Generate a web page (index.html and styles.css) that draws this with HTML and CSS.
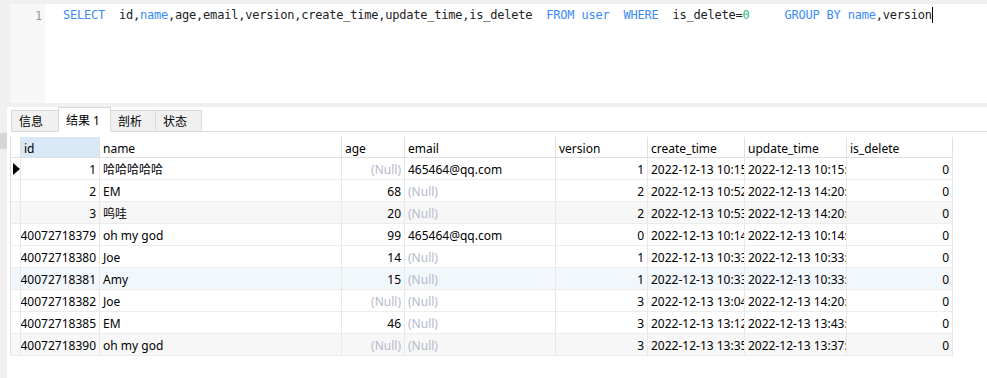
FILE: index.html
```html
<!DOCTYPE html>
<html>
<head>
<meta charset="utf-8">
<link rel="stylesheet" href="styles.css">
</head>
<body>
<div class="editor">
  <div class="gutter"><span class="ln">1</span></div>
  <div class="code"><span class="kw">SELECT</span>  id,<span class="kw">name</span>,age,email,version,create_time,update_time,is_delete  <span class="kw">FROM</span> <span class="kw">user</span>  <span class="kw">WHERE</span>  is_delete=<span class="num">0</span>     <span class="kw">GROUP BY</span> <span class="kw">name</span>,version<span class="caret"></span></div>
</div>
<div class="results">
  <div class="side"><div class="handle"></div></div>
  <div class="pane">
    <div class="tabs">
      <div class="tab t1">信息</div>
      <div class="tab active t2">结果 1</div>
      <div class="tab t3">剖析</div>
      <div class="tab t4">状态</div>
      <div class="tabfill"></div>
    </div>
    <div class="grid">
      <div class="c hd ind"></div><div class="c hd sel">id</div><div class="c hd">name</div><div class="c hd">age</div><div class="c hd">email</div><div class="c hd">version</div><div class="c hd">create_time</div><div class="c hd">update_time</div><div class="c hd">is_delete</div>

      <div class="c ind"><span class="arrow"></span></div><div class="c r"><span>1</span></div><div class="c">哈哈哈哈哈</div><div class="c r nul"><span>(Null)</span></div><div class="c">465464@qq.com</div><div class="c r"><span>1</span></div><div class="c">2022-12-13 10:15:32</div><div class="c">2022-12-13 10:15:32</div><div class="c r"><span>0</span></div>

      <div class="c ind"></div><div class="c r"><span>2</span></div><div class="c">EM</div><div class="c r"><span>68</span></div><div class="c nul">(Null)</div><div class="c r"><span>2</span></div><div class="c">2022-12-13 10:52:18</div><div class="c">2022-12-13 14:20:05</div><div class="c r"><span>0</span></div>

      <div class="c ind g"></div><div class="c r g"><span>3</span></div><div class="c g">呜哇</div><div class="c r g"><span>20</span></div><div class="c nul g">(Null)</div><div class="c r g"><span>2</span></div><div class="c g">2022-12-13 10:53:41</div><div class="c g">2022-12-13 14:20:05</div><div class="c r g"><span>0</span></div>

      <div class="c ind"></div><div class="c r"><span>1602840072718379</span></div><div class="c">oh my god</div><div class="c r"><span>99</span></div><div class="c">465464@qq.com</div><div class="c r"><span>0</span></div><div class="c">2022-12-13 10:14:27</div><div class="c">2022-12-13 10:14:27</div><div class="c r"><span>0</span></div>

      <div class="c ind"></div><div class="c r"><span>1602840072718380</span></div><div class="c">Joe</div><div class="c r"><span>14</span></div><div class="c nul">(Null)</div><div class="c r"><span>1</span></div><div class="c">2022-12-13 10:33:09</div><div class="c">2022-12-13 10:33:09</div><div class="c r"><span>0</span></div>

      <div class="c ind b"></div><div class="c r b"><span>1602840072718381</span></div><div class="c b">Amy</div><div class="c r b"><span>15</span></div><div class="c nul b">(Null)</div><div class="c r b"><span>1</span></div><div class="c b">2022-12-13 10:33:52</div><div class="c b">2022-12-13 10:33:52</div><div class="c r b"><span>0</span></div>

      <div class="c ind"></div><div class="c r"><span>1602840072718382</span></div><div class="c">Joe</div><div class="c r nul"><span>(Null)</span></div><div class="c nul">(Null)</div><div class="c r"><span>3</span></div><div class="c">2022-12-13 13:04:16</div><div class="c">2022-12-13 14:20:05</div><div class="c r"><span>0</span></div>

      <div class="c ind"></div><div class="c r"><span>1602840072718385</span></div><div class="c">EM</div><div class="c r"><span>46</span></div><div class="c nul">(Null)</div><div class="c r"><span>3</span></div><div class="c">2022-12-13 13:12:40</div><div class="c">2022-12-13 13:43:21</div><div class="c r"><span>0</span></div>

      <div class="c ind g"></div><div class="c r g"><span>1602840072718390</span></div><div class="c g">oh my god</div><div class="c r nul g"><span>(Null)</span></div><div class="c nul g">(Null)</div><div class="c r g"><span>3</span></div><div class="c g">2022-12-13 13:35:02</div><div class="c g">2022-12-13 13:37:48</div><div class="c r g"><span>0</span></div>
    </div>
  </div>
</div>
</body>
</html>
```

FILE: styles.css
```css
* { box-sizing: border-box; }
html, body { margin: 0; padding: 0; }
body {
  width: 987px;
  height: 378px;
  background: #f0f0f0;
  overflow: hidden;
  font-family: "Noto Sans", "Noto Sans CJK SC", sans-serif;
  font-size: 12px;
  color: #000;
  display: flex;
  flex-direction: column;
}
.editor {
  margin: 4px 0 4px 10px;
  height: 99px;
  display: flex;
  background: #fff;
}
.gutter {
  width: 35px;
  background: #f7f7f7;
  text-align: right;
  padding: 3px 3px 0 0;
}
.ln, .code {
  font-family: "DejaVu Sans Mono", "Liberation Mono", monospace;
  font-size: 12px;
  letter-spacing: -0.22px;
  line-height: 17px;
}
.ln { color: #9a9a9a; }
.code {
  flex: 1;
  padding: 3px 0 0 18px;
  white-space: pre;
  color: #222;
}
.kw { color: #3b8cf5; }
.num { color: #2ec06b; }
.caret {
  display: inline-block;
  width: 1px;
  height: 16px;
  background: #000;
  vertical-align: -4px;
}
.results {
  flex: 1;
  display: flex;
}
.side {
  width: 7px;
  padding-top: 26px;
}
.handle {
  height: 16px;
  background: #d6d6d6;
}
.pane {
  flex: 1;
  background: #fff;
  padding-left: 3px;
}
.tabs {
  display: flex;
  align-items: flex-end;
  height: 25px;
  margin-left: -3px;
  padding-left: 4px;
  background: #fff;
}
.tab {
  height: 22px;
  padding: 3px 0 0 7px;
  background: #f0f0f0;
  border: 1px solid #d9d9d9;
  margin-right: -1px;
  line-height: 16px;
}
.t1 { width: 48px; }
.t2 { width: 53px; }
.t3 { width: 46px; }
.t4 { width: 47px; }
.tab.active {
  height: 25px;
  background: #fff;
  border-bottom-color: #fff;
  padding-top: 5px;
  position: relative;
}
.tabfill {
  flex: 1;
  height: 1px;
  background: #d9d9d9;
  align-self: flex-end;
}
.grid {
  margin-top: 5px;
  display: grid;
  grid-template-columns: 11px 79px 242px 63px 151px 92px 97px 102px 106px;
  grid-template-rows: 21px;
  grid-auto-rows: 22px;
  width: 943px;
}
.c {
  border-right: 1px solid #e8e8e8;
  border-bottom: 1px solid #ececec;
  padding: 2px 3px 0;
  line-height: 19px;
  white-space: nowrap;
  overflow: hidden;
  display: flex;
  align-items: center;
}
.hd {
  border-bottom: 1px solid #e0e0e0;
  border-right: 1px solid #e0e0e0;
}
.hd.sel { background: #d9e8f7; }
.ind {
  border-left: 1px solid #e0e0e0;
  padding: 0;
  justify-content: center;
}
.r { justify-content: flex-end; }
.r span { flex-shrink: 0; }
.nul { color: #b5b9cc; }
.g { background: #f7f7f7; }
.b { background: #f2f7fc; }
.arrow {
  width: 0;
  height: 0;
  border-top: 6px solid transparent;
  border-bottom: 6px solid transparent;
  border-left: 7px solid #000;
  margin-left: 1px;
}
```
